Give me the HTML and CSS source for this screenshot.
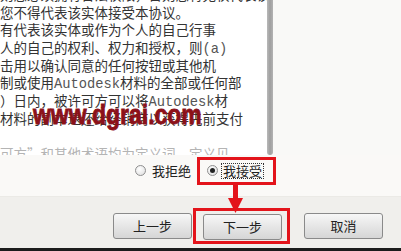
FILE: index.html
```html
<!DOCTYPE html>
<html>
<head>
<meta charset="utf-8">
<link rel="stylesheet" href="styles.css">
</head>
<body>
<div class="dialog">
  <div class="top">
    <div class="textbox">
      <div class="lines">
        <div class="line">则您必须拥有合法权限，否则您将无权代表该</div>
        <div class="line">您不得代表该实体接受本协议。</div>
        <div class="line">有代表该实体或作为个人的自己行事</div>
        <div class="line">人的自己的权利、权力和授权，则<span class="mono">(a)</span></div>
        <div class="line">击用以确认同意的任何按钮或其他机</div>
        <div class="line">制或使用<span class="mono">Autodesk</span>材料的全部或任何部</div>
        <div class="line">）日内，被许可方可以将<span class="mono">Autodesk</span>材</div>
        <div class="line">材料的副本退还给经销商以获得先前支付</div>
        <div class="line">&nbsp;</div>
        <div class="line faded">可方”和其他术语均为定义词，定义见</div>
      </div>
      <div class="watermark">www.dgrai.com</div>
    </div>
    <div class="scroll"><div class="thumb"></div></div>
    <div class="rest"></div>
  </div>
  <div class="options">
    <div class="opt">
      <span class="radio"></span>
      <span class="label">我拒绝</span>
    </div>
    <div class="opt hl">
      <span class="radio on"></span>
      <span class="label focus">我接受</span>
    </div>
  </div>
  <div class="buttons">
    <button class="btn">上一步</button>
    <div class="hlbtn"><button class="btn">下一步</button></div>
    <button class="btn cancel">取消</button>
  </div>
  <div class="strip"></div>
  <svg class="arrow" width="17" height="29" viewBox="0 0 17 29">
    <rect x="6" y="0" width="5" height="16" fill="#e3141b"/>
    <polygon points="1,13 16,13 8.5,28" fill="#e3141b"/>
  </svg>
</div>
</body>
</html>
```
FILE: styles.css
```css
html, body {
  margin: 0;
  padding: 0;
}
body {
  width: 401px;
  height: 251px;
  overflow: hidden;
  background: #f0efec;
}
.dialog {
  position: relative;
  width: 401px;
  height: 251px;
  display: flex;
  flex-direction: column;
  font-family: "Noto Sans CJK SC", "Liberation Sans", sans-serif;
}
.top {
  height: 155px;
  display: flex;
  background: #f9f9f7;
}
.textbox {
  position: relative;
  width: 267px;
  background: #ffffff;
  overflow: hidden;
}
.lines {
  margin-top: -14px;
  font-size: 13.5px;
  line-height: 17.7px;
  color: #333;
  white-space: nowrap;
}
.line {
  height: 17.7px;
}
.mono {
  font-family: "Liberation Mono", "DejaVu Sans Mono", monospace;
  font-size: 13.75px;
  color: #555;
}
.faded {
  color: #b4b4b4;
}
.watermark {
  position: absolute;
  left: 33px;
  top: 97px;
  font-family: "Liberation Sans", Arial, sans-serif;
  font-weight: bold;
  font-size: 27px;
  line-height: 34px;
  color: #8c1119;
  -webkit-text-stroke: 0.8px #8c1119;
  transform: scaleX(0.85) scaleY(1.05);
  transform-origin: left top;
  white-space: nowrap;
}
.scroll {
  width: 6px;
}
.thumb {
  height: 155px;
  border-radius: 0 0 3px 3px;
  background: linear-gradient(to right, #b9b9b9, #9f9f9f 50%, #b3b3b3);
}
.rest {
  flex: 1;
}
.options {
  height: 42px;
  box-sizing: border-box;
  padding: 2px 0 12px 135px;
  display: flex;
  align-items: center;
  gap: 6px;
  background: #faf9f7;
  border-bottom: 1px solid #ebeae6;
}
.opt {
  display: flex;
  align-items: center;
  height: 28px;
  box-sizing: border-box;
  font-size: 13px;
  color: #222;
}
.opt.hl {
  border: 3px solid #e3141b;
  width: 79px;
  padding-left: 7px;
}
.radio {
  width: 11px;
  height: 11px;
  box-sizing: border-box;
  border-radius: 50%;
  border: 1px solid #8f8f8f;
  background: radial-gradient(circle at 40% 35%, #ffffff, #dcdcdc);
  display: flex;
  align-items: center;
  justify-content: center;
}
.radio.on::after {
  content: "";
  width: 5px;
  height: 5px;
  border-radius: 50%;
  background: #222;
}
.label {
  margin-left: 6px;
  line-height: 14px;
}
.label.focus {
  margin-left: 4px;
  padding: 0 1px;
  outline: 1px dotted #333;
}
.buttons {
  flex: 1;
  display: flex;
  align-items: flex-start;
  padding: 11px 0 0 113px;
  background: #f0efec;
}
.btn {
  width: 79px;
  height: 26px;
  margin: 5px 0 0 0;
  padding: 0;
  box-sizing: border-box;
  border: 1px solid #8a8a8a;
  border-radius: 3px;
  background: linear-gradient(to bottom, #f7f7f7, #e6e6e6 50%, #d6d6d6);
  font-family: "Noto Sans CJK SC", sans-serif;
  font-size: 13px;
  color: #222;
  line-height: 24px;
}
.hlbtn {
  margin-left: 1px;
  border: 3px solid #e3141b;
  padding: 2px 5px 1px 7px;
}
.hlbtn .btn {
  margin: 0;
}
.btn.cancel {
  margin-left: 14px;
}
.strip {
  height: 3px;
  background: #1c1c1c;
}
.arrow {
  position: absolute;
  left: 227px;
  top: 185px;
}
```
